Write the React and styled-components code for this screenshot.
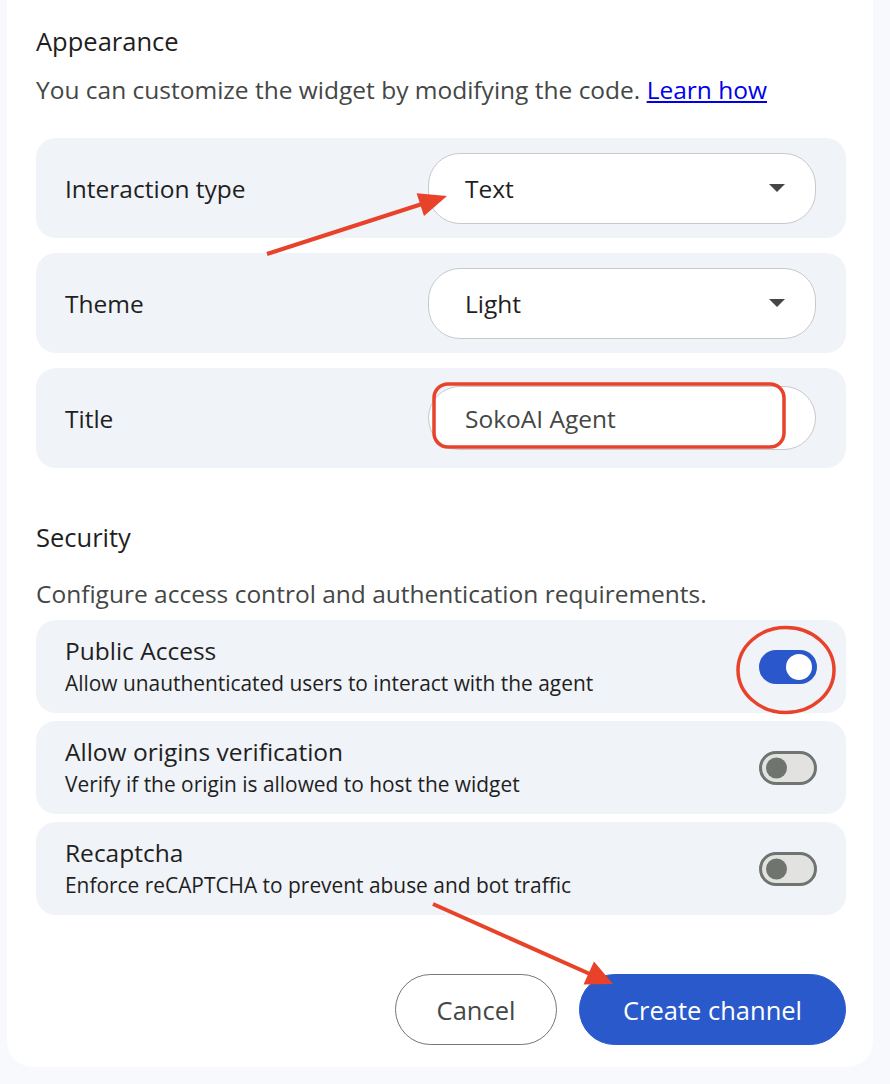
import React from "react";
import styled, { createGlobalStyle } from "styled-components";

const GlobalStyle = createGlobalStyle`
  body {
    margin: 0;
    background: #f8f9fd;
    font-family: "Open Sans", Roboto, sans-serif;
    color: #1f1f1f;
  }
`;

const Page = styled.div`
  position: relative;
  width: 890px;
  min-height: 1084px;
  padding: 0 17px 19px 7px;
  box-sizing: border-box;
`;

const Card = styled.section`
  background: #fff;
  border-radius: 0 0 26px 26px;
  padding: 26px 27px 22px 29px;
`;

const Heading = styled.h3`
  margin: 0;
  font-size: 25.5px;
  font-weight: 500;
  line-height: 30px;
  color: #1f1f1f;
`;

const Description = styled.p`
  margin: ${(p) => p.$top}px 0 0;
  font-size: 24.5px;
  line-height: 32px;
  color: #444746;
  & a {
    color: #0000ee;
    text-decoration: underline;
  }
`;

const List = styled.div`
  display: flex;
  flex-direction: column;
  gap: ${(p) => p.$gap}px;
  margin-top: ${(p) => p.$top}px;
`;

const FieldRow = styled.div`
  display: flex;
  align-items: center;
  justify-content: space-between;
  height: ${(p) => p.$h}px;
  padding: 0 30px 0 29px;
  background: #f0f3f8;
  border-radius: 20px;
`;

const Label = styled.span`
  font-size: 24.5px;
  color: #1f1f1f;
`;

const Select = styled.div`
  display: flex;
  align-items: center;
  justify-content: space-between;
  box-sizing: border-box;
  width: 388px;
  height: ${(p) => p.$h}px;
  padding: 0 30px 0 36px;
  background: #fff;
  border: 1px solid #c7c9cc;
  border-radius: 32px;
  font-size: 24.5px;
  color: ${(p) => (p.$muted ? "#444746" : "#1f1f1f")};
`;

const Caret = styled.span`
  width: 0;
  height: 0;
  border-left: 8px solid transparent;
  border-right: 8px solid transparent;
  border-top: 8px solid #444746;
`;

const ToggleRow = styled.div`
  display: flex;
  align-items: center;
  justify-content: space-between;
  height: 93px;
  padding: 0 29px 0 29px;
  box-sizing: border-box;
  background: #f0f3f8;
  border-radius: 20px;
`;

const ToggleText = styled.div`
  display: flex;
  flex-direction: column;
  gap: 4px;
  margin-top: -2px;
`;

const ToggleTitle = styled.span`
  font-size: 24.5px;
  line-height: 30px;
  color: #1f1f1f;
`;

const ToggleSub = styled.span`
  font-size: 20.9px;
  line-height: 26px;
  color: #1f1f1f;
`;

const Switch = styled.span`
  position: relative;
  display: inline-block;
  box-sizing: border-box;
  width: 58px;
  height: 34px;
  border-radius: 17px;
  background: ${(p) => (p.$on ? "#2a57cb" : "#e2e3e1")};
  border: 3px solid ${(p) => (p.$on ? "#2a57cb" : "#6f7470")};
  &::after {
    content: "";
    position: absolute;
    top: 50%;
    transform: translateY(-50%);
    left: ${(p) => (p.$on ? "24px" : "4px")};
    width: ${(p) => (p.$on ? 26 : 21)}px;
    height: ${(p) => (p.$on ? 26 : 21)}px;
    border-radius: 50%;
    background: ${(p) => (p.$on ? "#fff" : "#70746f")};
  }
`;

const Actions = styled.div`
  display: flex;
  justify-content: flex-end;
  gap: 22px;
  margin-top: 59px;
`;

const Button = styled.button`
  height: 71px;
  padding: 0;
  border-radius: 36px;
  font-family: "Open Sans", Roboto, sans-serif;
  font-size: 25.5px;
  font-weight: 500;
  cursor: pointer;
  border: 1px solid ${(p) => (p.$primary ? "#2a59cb" : "#747775")};
  background: ${(p) => (p.$primary ? "#2a59cb" : "#fff")};
  color: ${(p) => (p.$primary ? "#fff" : "#444746")};
  width: ${(p) => p.$w}px;
`;

const Overlay = styled.svg`
  position: absolute;
  top: 0;
  left: 0;
  pointer-events: none;
`;

const RED = "#e8432a";

function Annotations() {
  return (
    <Overlay width="890" height="1084" viewBox="0 0 890 1084">
      <line x1="267" y1="254" x2="422" y2="204" stroke={RED} strokeWidth="4" />
      <polygon points="447,196 424,216 416.6,193.2" fill={RED} />
      <line x1="433" y1="904" x2="590" y2="974" stroke={RED} strokeWidth="4" />
      <polygon points="613,984 583.5,984.6 594,961.6" fill={RED} />
      <rect x="434" y="384" width="350" height="63" rx="14" fill="none" stroke={RED} strokeWidth="3.5" />
      <ellipse cx="786" cy="670" rx="48" ry="42.5" fill="none" stroke={RED} strokeWidth="3.5" />
    </Overlay>
  );
}

const toggles = [
  { title: "Public Access", sub: "Allow unauthenticated users to interact with the agent", on: true },
  { title: "Allow origins verification", sub: "Verify if the origin is allowed to host the widget", on: false },
  { title: "Recaptcha", sub: "Enforce reCAPTCHA to prevent abuse and bot traffic", on: false },
];

export default function App() {
  return (
    <>
      <GlobalStyle />
      <Page>
        <Card>
          <Heading>Appearance</Heading>
          <Description $top={18}>
            You can customize the widget by modifying the code. <a href="#learn">Learn how</a>
          </Description>
          <List $gap={15} $top={32}>
            <FieldRow $h={100}>
              <Label>Interaction type</Label>
              <Select $h={71}>
                Text
                <Caret />
              </Select>
            </FieldRow>
            <FieldRow $h={100}>
              <Label>Theme</Label>
              <Select $h={71}>
                Light
                <Caret />
              </Select>
            </FieldRow>
            <FieldRow $h={100}>
              <Label>Title</Label>
              <Select $h={64} $muted>
                SokoAI Agent
              </Select>
            </FieldRow>
          </List>

          <Heading style={{ marginTop: 54 }}>Security</Heading>
          <Description $top={26}>
            Configure access control and authentication requirements.
          </Description>
          <List $gap={8} $top={10}>
            {toggles.map((t) => (
              <ToggleRow key={t.title}>
                <ToggleText>
                  <ToggleTitle>{t.title}</ToggleTitle>
                  <ToggleSub>{t.sub}</ToggleSub>
                </ToggleText>
                <Switch $on={t.on} />
              </ToggleRow>
            ))}
          </List>

          <Actions>
            <Button $w={162}>Cancel</Button>
            <Button $primary $w={267}>Create channel</Button>
          </Actions>
        </Card>
        <Annotations />
      </Page>
    </>
  );
}
